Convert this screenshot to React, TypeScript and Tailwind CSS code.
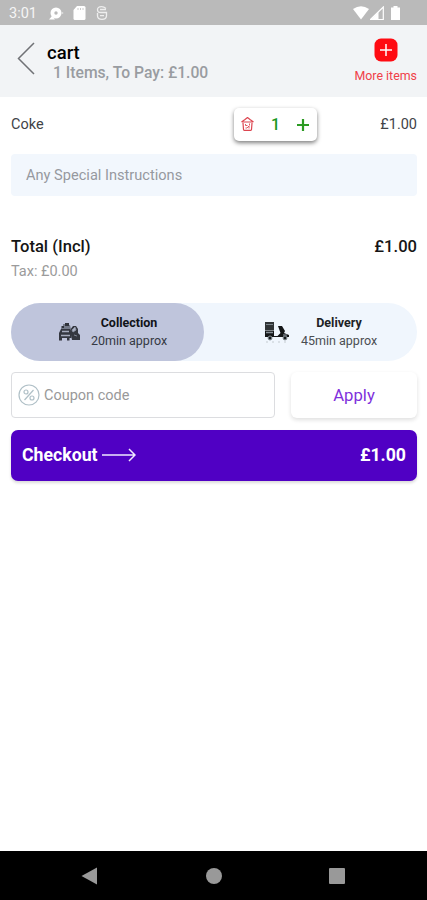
import React from "react";

function StatusBar() {
  return (
    <div className="flex h-[25px] items-center bg-[#bababa] pl-[9px] pr-[27px] text-[#f5f5f5]">
      <span className="mt-[4px] w-[39px] whitespace-nowrap text-[14.5px] leading-none">3:01</span>
      <svg className="mt-[2px]" width="17" height="14" viewBox="0 0 17 14">
        <circle cx="8" cy="6" r="5.5" fill="#fff" />
        <path d="M4 9 1 12.5h6z" fill="#fff" />
        <circle cx="8" cy="6" r="1.7" fill="#bababa" />
        <circle cx="14.3" cy="6" r="1.1" fill="#ddd" />
      </svg>
      <svg className="ml-[8px] mt-[1px]" width="13" height="14" viewBox="0 0 13 14">
        <path d="M4 0h7q1.5 0 1.5 1.500v11q0 1.500-1.500 1.500H2Q.5 14 .5 12.500V4z" fill="#fff" />
        <path d="M5 2v2M7.500 2v2M10 2v2" stroke="#ccc" strokeWidth="1" />
      </svg>
      <svg className="ml-[10px] mt-[1px]" width="12" height="14" viewBox="0 0 12 14" fill="none" stroke="#eee" strokeWidth="1.300">
        <path d="M10 2.500Q8 .7 5.500.7 1.500.7 1.500 3.700T5 6.500h5.500v3.300q0 3.500-4.500 3.500t-4.500-3.500V7" />
        <path d="M4 3.500h6M4 9.700h4" />
      </svg>
      <svg className="ml-auto" width="16" height="14" viewBox="0 0 16 14">
        <path d="M0 3Q8-2.500 16 3L8 13.500z" fill="#fff" />
      </svg>
      <svg className="ml-[1px]" width="14" height="14" viewBox="0 0 14 14">
        <path d="M.5 13.500 13.300 1v12.500z" fill="none" stroke="#fff" strokeWidth="1.200" />
        <path d="M1 13.500 8.500 6v7.500z" fill="#fff" />
      </svg>
      <svg className="ml-[7px]" width="9" height="14" viewBox="0 0 9 14">
        <path d="M2.500 0h4v1.500H9V14H0V1.500h2.500z" fill="#fff" />
      </svg>
    </div>
  );
}

function Header() {
  return (
    <header className="flex h-[72px] justify-between bg-[#f2f4f6] pl-[17px] pr-[10px]">
      <div className="flex">
        <svg className="mt-[17px]" width="18" height="33" viewBox="0 0 18 33" fill="none" stroke="#707276" strokeWidth="1.500">
          <path d="M17 1 1.500 16.500 17 32" />
        </svg>
        <div className="pl-[12px] pt-[18px] font-medium">
          <h1 className="text-[18.5px] leading-[20px] text-black">cart</h1>
          <p className="whitespace-nowrap pl-[6px] text-[15.7px] leading-[20px] text-[#999ca1]">1 Items, To Pay: £1.00</p>
        </div>
      </div>
      <div className="flex flex-col items-center pt-[13px] text-[#f04048]">
        <svg width="24" height="24" viewBox="0 0 24 24">
          <rect x=".5" y=".5" width="23" height="23" rx="6.500" fill="#ff0b12" />
          <path d="M12 6v12M6 12h12" stroke="#fff" strokeWidth="1.500" />
        </svg>
        <span className="mt-[6px] whitespace-nowrap text-[12.4px] leading-[16px]">More items</span>
      </div>
    </header>
  );
}

function Quantity() {
  return (
    <div className="ml-auto flex h-[33px] w-[83px] items-center justify-between rounded-[5px] bg-white pl-[7px] pr-[8px] shadow-[0_2px_4px_rgba(0,0,0,0.5)]">
      <svg width="13" height="14" viewBox="0 0 13 14" fill="none" stroke="#dc4550" strokeWidth="1.200">
        <path d="M.5 5 4 2.500l2.500-2L9 2.500 12.500 5M1 5h11M2 6l.5 6.500q0 .8.8.8h6.400q.8 0 .8-.8L11 6" />
        <path d="M4.500 7v1.500h2M8.500 6.500v2M4.500 11h1.500l2-2v2.500" strokeWidth=".9" />
      </svg>
      <span className="pt-[1px] text-[16px] font-medium leading-none text-[#18981d]">1</span>
      <svg className="mt-[2px]" width="12" height="12" viewBox="0 0 12 12" stroke="#2c9b23" strokeWidth="2.2">
        <path d="M6 0v12M0 6h12" />
      </svg>
    </div>
  );
}

function CollectionIcon() {
  return (
    <svg width="22" height="20" viewBox="0 0 22 20">
      <path d="M3 7V4h2V2h2V1h4v2h1l1 4" fill="#747a89" />
      <path d="M7 1h4v3H7zM4 4h2v2H4z" fill="#30333b" />
      <path d="M3 7h9l1.500 4v5h-2v2.500H9V16H4v2.500H1V11z" fill="#343740" />
      <path d="M4 9.500h7M3 13.500h9" stroke="#a5abbd" strokeWidth="1.300" />
      <path d="m12 8 3-4h3l2 3v4l2 2v5h-8l-1-5z" fill="#343740" />
      <path d="m14 8 3-3 1 3-3 2zM16 13l3 1" fill="#abb1c5" stroke="#9299aa" strokeWidth=".8" />
    </svg>
  );
}

function DeliveryIcon() {
  return (
    <svg width="26" height="22" viewBox="0 0 26 22">
      <path d="M1 1h9v8H1z" fill="#303436" />
      <path d="M2 3.500h7" stroke="#7c858b" />
      <path d="M1 9.500h9V15h3.500l3-3L14 5h4l3 5-1 2 5 2v2H1z" fill="#151718" />
      <path d="M2 11.500h7" stroke="#899299" strokeWidth="1.500" />
      <path d="M19 14h4" stroke="#6c757b" strokeWidth="1.500" />
      <circle cx="6" cy="17" r="2" fill="#15191b" stroke="#8e979d" />
      <circle cx="21" cy="17" r="2" fill="#15191b" stroke="#8e979d" />
      <path d="M2 21h2m4 0h2m4 0h2m4 0h2" stroke="#c4cbd0" />
    </svg>
  );
}

function OrderMethods() {
  return (
    <div className="mt-[22px] flex h-[58px] rounded-full bg-[#f0f6fd] text-center text-[12.5px]">
      <button className="flex w-[193px] items-center rounded-full bg-[#bfc5dc] pl-[47px]">
        <CollectionIcon />
        <span className="ml-[11px] w-[76px] whitespace-nowrap leading-[18px] text-[#353943]">
          <strong className="block font-bold text-[#111318]">Collection</strong>
          <span className="block">20min approx</span>
        </span>
      </button>
      <button className="flex flex-1 items-center pl-[60px]">
        <DeliveryIcon />
        <span className="ml-[11px] w-[76px] whitespace-nowrap leading-[18px] text-[#4b4e52]">
          <strong className="block font-bold text-[#202225]">Delivery</strong>
          <span className="block">45min approx</span>
        </span>
      </button>
    </div>
  );
}

function Coupon() {
  return (
    <div className="mt-[11px] flex h-[46px] gap-[16px]">
      <label className="flex w-[264px] items-center gap-[4px] rounded-[4px] border border-[#dcdde0] pl-[6px] text-[#999]">
        <svg width="22" height="22" viewBox="0 0 22 22" fill="none" stroke="#b0c0c7" strokeWidth="1.200">
          <circle cx="11" cy="11" r="10" />
          <circle cx="8" cy="8" r="2" />
          <circle cx="14" cy="14" r="2" />
          <path d="m15.500 6-9 10" />
        </svg>
        <span className="pt-[2px] text-[14.500px]">Coupon code</span>
      </label>
      <button className="flex-1 rounded-[6px] bg-white pt-[2px] text-[16.700px] text-[#8030dc] shadow-[0_2px_4px_rgba(0,0,0,0.13)]">Apply</button>
    </div>
  );
}

function NavigationBar() {
  return (
    <nav className="flex h-[49px] items-center bg-black pl-[81px] pr-[81px]">
      <svg width="17" height="18" viewBox="0 0 17 18"><path d="M.5 9 16 .5v17z" fill="#999" /></svg>
      <span className="ml-[108px] size-[16px] rounded-full bg-[#999]" />
      <span className="ml-[107px] size-[16px] shrink-0 rounded-[1px] bg-[#999]" />
    </nav>
  );
}

export default function App() {
  return (
    <div className="flex h-[900px] w-[427px] flex-col overflow-hidden bg-white font-[Roboto,sans-serif]">
      <StatusBar />
      <Header />
      <main className="flex flex-1 flex-col px-[10px] pl-[11px] pt-[10px]">
        <div className="flex h-[34px] items-center text-[14.500px] text-[#414347]">
          <span className="pt-[2px]">Coke</span>
          <Quantity />
          <span className="w-[100px] pt-[2px] text-right">£1.00</span>
        </div>
        <div className="mt-[13px] flex h-[42px] items-center rounded-[4px] bg-[#f2f7fd] pl-[15px] pt-[2px] text-[14.600px] text-[#96999f]">Any Special Instructions</div>
        <div className="mt-[41px] flex h-[20px] items-center justify-between text-[16.600px] font-medium text-[#151515]">
          <span>Total (Incl)</span>
          <span>£1.00</span>
        </div>
        <p className="mt-[6px] text-[14.500px] leading-[18px] text-[#9b9b9b]">Tax: £0.00</p>
        <OrderMethods />
        <Coupon />
        <button className="mt-[12px] flex h-[51px] items-center rounded-[7px] bg-[#5000c4] px-[11px] text-[17.700px] font-bold text-white shadow-[0_2px_3px_rgba(0,0,0,0.15)]">
          <span>Checkout</span>
          <svg className="-mt-[1px] ml-[4px]" width="34" height="14" viewBox="0 0 34 14" fill="none" stroke="#eee8ff" strokeWidth="1.500">
            <path d="M0 7h33M27 1l6 6-6 6" />
          </svg>
          <span className="ml-auto">£1.00</span>
        </button>
      </main>
      <NavigationBar />
    </div>
  );
}
